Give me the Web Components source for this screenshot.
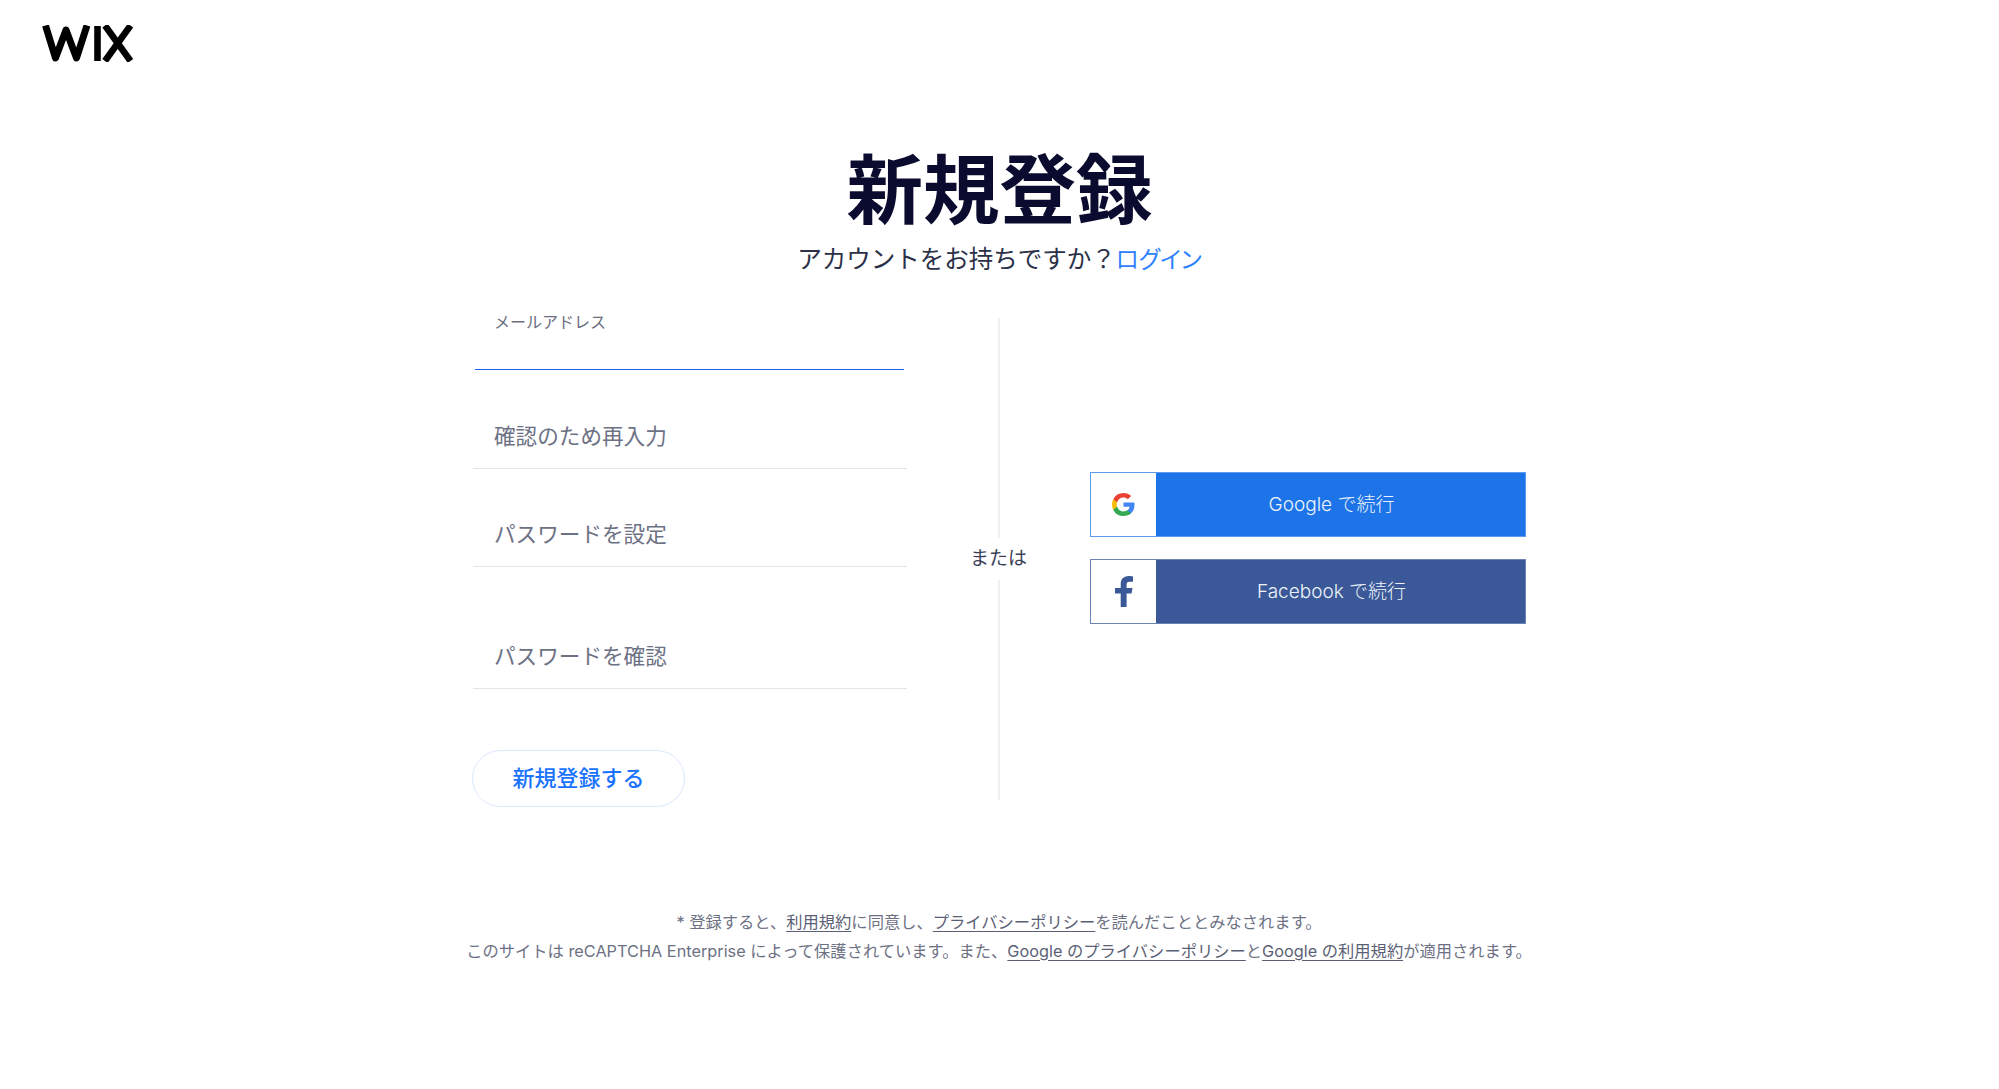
<!DOCTYPE html>
<html lang="ja">
<head>
<meta charset="utf-8">
<title>新規登録</title>
<style>
html, body { margin: 0; padding: 0; background: #fff; }
body {
    font-family: "Inter", "Noto Sans CJK JP", sans-serif;
    color: #162d3d;
}
</style>
</head>
<body>
<wix-logo></wix-logo>
<signup-header></signup-header>
<signup-layout>
    <text-field slot="form" focused style="--h:52px">メールアドレス</text-field>
    <text-field slot="form" style="--top:39px;--h:60px">確認のため再入力</text-field>
    <text-field slot="form" style="--top:38px;--h:60px">パスワードを設定</text-field>
    <text-field slot="form" style="--top:62px;--h:60px">パスワードを確認</text-field>
    <signup-button slot="form">新規登録する</signup-button>
    <or-divider slot="divider">または</or-divider>
    <social-button slot="social" kind="google">Google で続行</social-button>
    <social-button slot="social" kind="facebook">Facebook で続行</social-button>
</signup-layout>
<legal-footer></legal-footer>

<script>
function makeRoot(el, html) {
    var template = document.createElement('template');
    template.innerHTML = html;
    el.attachShadow({ mode: 'open' }).appendChild(template.content.cloneNode(true));
}

class WixLogo extends HTMLElement {
    connectedCallback() {
        makeRoot(this, `
<style>
:host { display: block; height: 86px; padding-left: 42px; box-sizing: border-box; padding-top: 25px; }
svg { display: block; }
</style>
<svg width="92" height="37" viewBox="0 0 92 37" aria-label="WIX">
    <g fill="none" stroke="#000" stroke-width="6.6">
        <path d="M3.5 0.5 L13.5 33 L24 5 L34.5 33 L45 0.5" stroke-linejoin="round" stroke-width="7"/>
        <path d="M55.5 1 V36"/>
        <path d="M63 0.5 L88.5 36"/>
        <path d="M88.5 0.5 L63 36"/>
    </g>
</svg>`);
    }
}
customElements.define('wix-logo', WixLogo);

class SignupHeader extends HTMLElement {
    connectedCallback() {
        makeRoot(this, `
<style>
:host { display: block; text-align: center; }
h1 { margin: 0; font-size: 76.5px; line-height: 100px; font-weight: 700; color: #0a0b2e; padding-top: 54px; }
p { margin: 0; font-size: 24.5px; line-height: 36px; color: #2b3148; padding-top: 1px; }
a { color: #2f80ff; text-decoration: none; font-size: 23.5px; font-feature-settings: "palt"; }
</style>
<h1>新規登録</h1>
<p>アカウントをお持ちですか？<a href="#">ログイン</a></p>`);
    }
}
customElements.define('signup-header', SignupHeader);

class SignupLayout extends HTMLElement {
    connectedCallback() {
        makeRoot(this, `
<style>
:host { display: grid; grid-template-columns: 435px 183px 436px; justify-content: center; margin-top: 40px; padding-right: 1px; }
.form { display: flex; flex-direction: column; }
.divider { display: flex; height: 482px; justify-content: center; }
.social { display: flex; flex-direction: column; gap: 22px; padding-top: 154px; }
</style>
<div class="form"><slot name="form"></slot></div>
<div class="divider"><slot name="divider"></slot></div>
<div class="social"><slot name="social"></slot></div>`);
    }
}
customElements.define('signup-layout', SignupLayout);

class TextField extends HTMLElement {
    connectedCallback() {
        const focused = this.hasAttribute('focused');
        makeRoot(this, `
<style>
:host { display: block; margin-top: var(--top, 0); height: var(--h, 60px); box-sizing: border-box;
    border-bottom: 1px solid ${focused ? '#1f62e6' : '#e2e5ec'}; margin-left: ${focused ? '3px' : '1px'}; margin-right: ${focused ? '3px' : '0'}; }
.label { color: #6d7184; }
.big { font-size: 21.6px; line-height: 30px; padding: 12px 0 0 21px; }
.small { font-size: 16px; line-height: 24px; margin-top: -8px; padding: 0 0 0 19px; color: #6a6e80; }
</style>
<div class="label ${focused ? 'small' : 'big'}"><slot></slot></div>`);
    }
}
customElements.define('text-field', TextField);

class SignupButton extends HTMLElement {
    connectedCallback() {
        makeRoot(this, `
<style>
:host { display: block; margin-top: 61px; }
button { display: block; box-sizing: border-box; width: 213px; height: 57px; padding: 0 0 6px; background: #fff;
    border: 1.5px solid #dbe8ff; border-radius: 29px; color: #1a73ff;
    font: inherit; font-size: 22px; font-weight: 500; }
</style>
<button type="button"><slot></slot></button>`);
    }
}
customElements.define('signup-button', SignupButton);

class OrDivider extends HTMLElement {
    connectedCallback() {
        makeRoot(this, `
<style>
:host { display: flex; flex-direction: column; align-items: center; height: 100%; }
.line { width: 2px; background: #eff0f3; flex: 1; margin-left: 2px; }
.text { font-size: 19px; line-height: 30px; color: #3b4057; padding: 6px 0; }
</style>
<div class="line"></div>
<div class="text"><slot></slot></div>
<div class="line"></div>`);
    }
}
customElements.define('or-divider', OrDivider);

const SOCIAL_ICONS = {
    google: `<svg width="23" height="23" viewBox="0 0 18 18">
        <path fill="#4285F4" d="M17.64 9.2c0-.64-.06-1.25-.16-1.84H9v3.48h4.84a4.14 4.14 0 0 1-1.8 2.72v2.26h2.92c1.7-1.57 2.68-3.88 2.68-6.62z"/>
        <path fill="#34A853" d="M9 18c2.43 0 4.47-.8 5.96-2.18l-2.92-2.26c-.8.54-1.84.86-3.04.86-2.34 0-4.32-1.58-5.03-3.7H.96v2.33A9 9 0 0 0 9 18z"/>
        <path fill="#FBBC05" d="M3.97 10.72A5.4 5.4 0 0 1 3.68 9c0-.6.1-1.18.29-1.72V4.95H.96A9 9 0 0 0 0 9c0 1.45.35 2.83.96 4.05l3.01-2.33z"/>
        <path fill="#EA4335" d="M9 3.58c1.32 0 2.5.45 3.44 1.35l2.58-2.59C13.46.89 11.43 0 9 0A9 9 0 0 0 .96 4.95l3.01 2.33C4.68 5.16 6.66 3.58 9 3.58z"/>
    </svg>`,
    facebook: `<svg width="18" height="31" viewBox="0 0 18 31">
        <path fill="#3b5998" d="M11.6 31V17.5h5l.9-5.6h-5.900V8.600c0-1.700.6-2.900 3-2.900H18V.4C17.4.3 15.700 0 13.700 0 9.200 0 5.700 2.700 5.700 7.900v4H0v5.600h5.700V31z"/>
    </svg>`
};

class SocialButton extends HTMLElement {
    connectedCallback() {
        const kind = this.getAttribute('kind');
        const main = kind === 'google' ? '#1d74e8' : '#3b5998';
        const edge = kind === 'google' ? '#5c9cf0' : '#6a83b5';
        makeRoot(this, `
<style>
:host { display: flex; height: 65px; box-sizing: border-box; border: 1.5px solid ${edge}; background: ${main}; }
.icon { width: 65px; background: #fff; display: flex; align-items: center; justify-content: center; flex: none; }
.text { flex: 1; text-align: center; color: #eef3fb; font-size: 19px; line-height: 64px; font-weight: 300; padding-right: 18px; }
</style>
<div class="icon">${SOCIAL_ICONS[kind]}</div>
<div class="text"><slot></slot></div>`);
    }
}
customElements.define('social-button', SocialButton);

class LegalFooter extends HTMLElement {
    connectedCallback() {
        makeRoot(this, `
<style>
:host { display: block; text-align: center; margin-top: 101px; font-size: 16.3px; line-height: 29px; color: #6d7184; padding-right: 1px; }
a { color: #5b5f75; text-decoration: underline; text-underline-offset: 3px; }
p { margin: 0; }
</style>
<p>* 登録すると、<a href="#">利用規約</a>に同意し、<a href="#">プライバシーポリシー</a>を読んだこととみなされます。</p>
<p>このサイトは reCAPTCHA Enterprise によって保護されています。また、<a href="#">Google のプライバシーポリシー</a>と<a href="#">Google の利用規約</a>が適用されます。</p>`);
    }
}
customElements.define('legal-footer', LegalFooter);
</script>
</body>
</html>
